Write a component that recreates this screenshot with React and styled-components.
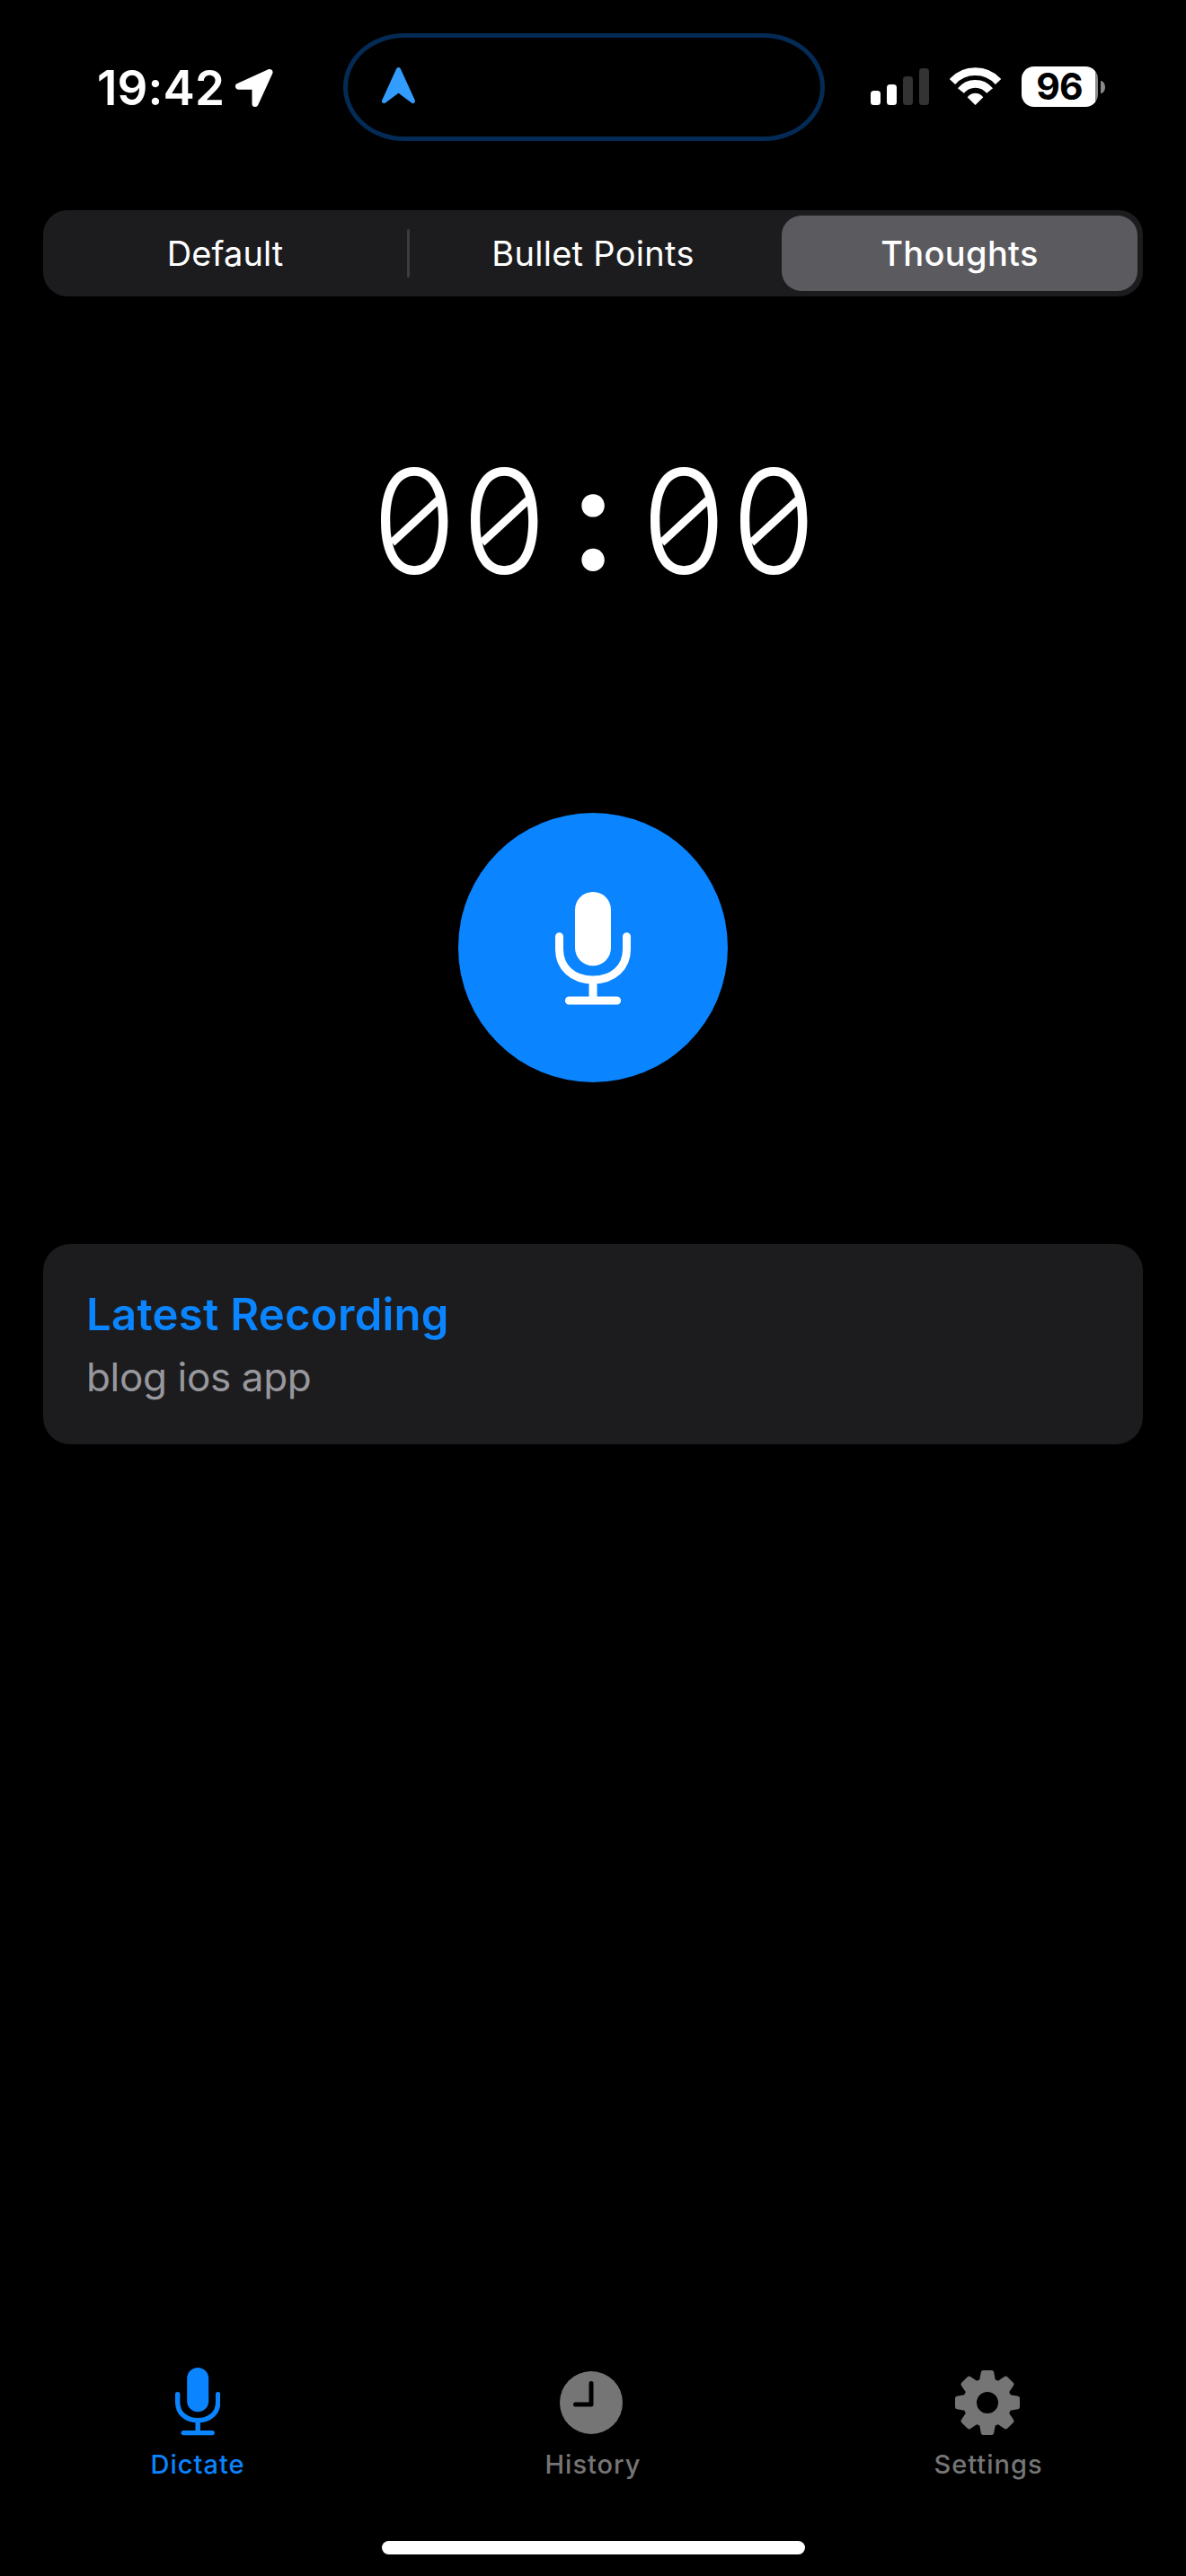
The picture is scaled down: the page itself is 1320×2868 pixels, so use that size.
import React from "react";
import styled, { createGlobalStyle } from "styled-components";

const blue = "#0a84ff";
const gray = "#757575";

const GlobalStyle = createGlobalStyle`
  *, *::before, *::after { box-sizing: border-box; }
  body { margin: 0; background: #000; }
`;

const Screen = styled.main`
  display: flex;
  flex-direction: column;
  width: 1320px;
  height: 2868px;
  overflow: hidden;
  background: #000;
  color: #fff;
  font-family: Inter, "Liberation Sans", sans-serif;
  font-feature-settings: "kern";
`;

const StatusBar = styled.header`
  display: grid;
  grid-template-columns: 382px 536px 402px;
  height: 234px;
  padding-top: 37px;
  align-items: start;
`;

const StatusSide = styled.div`
  display: flex;
  align-items: center;
  height: ${(p) => p.$height}px;
  padding-left: ${(p) => p.$inset}px;
`;

const Time = styled.span`
  width: 154px;
  font-size: 53px;
  line-height: 64px;
  font-weight: 600;
  letter-spacing: 0.1px;
  white-space: nowrap;
`;

const Island = styled.div`
  display: flex;
  align-items: center;
  height: 120px;
  padding: 0 0 5px 37px;
  border: 5px solid #032b55;
  border-radius: 68px / 60px;
`;

const Signal = styled.div`
  display: flex;
  align-items: flex-end;
  gap: 7px;
  height: 41px;
  margin-right: 23px;
`;

const Bar = styled.i`
  width: 11px;
  height: ${(p) => p.$height}px;
  border-radius: 3.5px;
  background: ${(p) => (p.$on ? "#fff" : "#333")};
`;

const Battery = styled.div`
  display: flex;
  align-items: center;
  gap: 3px;
  margin-left: 23px;
`;

const BatteryBody = styled.div`
  display: flex;
  align-items: center;
  justify-content: center;
  width: 85px;
  height: 45px;
  padding-right: 1px;
  border-radius: 14px;
  background: linear-gradient(to right, #fff 82px, #8a8a8a 82px);
  color: #000;
  font-size: 41px;
  font-weight: 700;
  line-height: 45px;
  letter-spacing: -1px;
`;

const BatteryTip = styled.i`
  width: 5px;
  height: 14px;
  border-radius: 0 5px 5px 0 / 0 7px 7px 0;
  background: #8a8a8a;
`;

const Segments = styled.nav`
  display: grid;
  grid-template-columns: 405px 3px 408px 1fr;
  align-items: center;
  flex: none;
  height: 96px;
  margin: 0 48px;
  padding-right: 6px;
  border-radius: 27px;
  background: #1c1c1e;
`;

const Segment = styled.button`
  display: flex;
  align-items: center;
  justify-content: center;
  height: 84px;
  margin-left: ${(p) => (p.$active ? 6 : 0)}px;
  padding: 0;
  border: 0;
  border-radius: 22px;
  background: ${(p) => (p.$active ? "#5b5a5f" : "transparent")};
  color: #fff;
  font-family: inherit;
  font-size: 38px;
  font-weight: ${(p) => (p.$active ? 500 : 400)};
  letter-spacing: ${(p) => p.$track}px;
`;

const Divider = styled.i`
  height: 54px;
  border-radius: 2px;
  background: #3c3c3f;
`;

const Timer = styled.time`
  display: flex;
  flex: none;
  justify-content: center;
  height: 160px;
  margin-top: 170px;
  font-size: 162px;
  line-height: 160px;
`;

const Colon = styled.span`
  width: 100px;
  padding-bottom: 8px;
  font-weight: 600;
  line-height: 152px;
  text-align: center;
`;

const DigitCell = styled.span`
  display: grid;
  place-items: center;
  width: 100px;
  height: 160px;

  &::after {
    content: "";
    grid-area: 1 / 1;
    width: 70px;
    height: 9px;
    background: #fff;
    transform: rotate(-42.7deg);
  }
`;

const Digit = styled.span`
  grid-area: 1 / 1;
  font-size: 160px;
  font-weight: 330;
  font-feature-settings: "tnum";
  transform: translateX(-0.5px) scaleX(0.95);
`;

const RecordButton = styled.button`
  display: flex;
  align-items: center;
  justify-content: center;
  flex: none;
  align-self: center;
  width: 300px;
  height: 300px;
  margin-top: 245px;
  padding: 1px 0 0;
  border: 0;
  border-radius: 50%;
  background: ${blue};
  color: #fff;
`;

const Card = styled.section`
  display: flex;
  flex-direction: column;
  flex: none;
  height: 223px;
  margin: 180px 48px 0;
  padding: 48px 48px 0;
  border-radius: 30px;
  background: #1c1c1e;
`;

const CardTitle = styled.h2`
  margin: 0;
  color: ${blue};
  font-size: 49px;
  line-height: 62px;
  font-weight: 600;
  letter-spacing: 0.28px;
`;

const CardText = styled.p`
  margin: 8px 0 0;
  color: #98979d;
  font-size: 44px;
  line-height: 60px;
  letter-spacing: -0.35px;
`;

const TabBar = styled.nav`
  display: grid;
  grid-template-columns: repeat(3, 440px);
  height: 193px;
  margin-top: auto;
`;

const Tab = styled.button`
  display: flex;
  flex-direction: column;
  align-items: center;
  padding: 0;
  border: 0;
  background: none;
  color: ${(p) => (p.$active ? blue : gray)};
  font-family: inherit;
`;

const TabIcon = styled.span`
  display: flex;
  align-items: center;
  justify-content: center;
  height: 78px;
  padding-right: ${(p) => p.$nudge || 0}px;
  padding-bottom: ${(p) => p.$lift || 0}px;
`;

const TabLabel = styled.span`
  margin-top: 12px;
  font-size: 29px;
  line-height: 36px;
  font-weight: 500;
  letter-spacing: 1px;
`;

const HomeArea = styled.footer`
  display: flex;
  justify-content: center;
  height: 39px;
`;

const HomeBar = styled.i`
  width: 471px;
  height: 15px;
  border-radius: 8px;
  background: #fff;
`;

function MicIcon({ width }) {
  return (
    <svg width={width} height={(width * 126) / 84} viewBox="0 0 84 126" fill="currentColor">
      <rect x="22" y="0" width="40" height="82.3" rx="20" />
      <path
        d="M4.5 49.7V64C4.5 84 19.5 98 42 98S79.5 84 79.5 64V49.7M42 98V121M15.4 121H68.6"
        fill="none"
        stroke="currentColor"
        strokeWidth="9"
        strokeLinecap="round"
      />
    </svg>
  );
}

function ClockIcon() {
  return (
    <svg width="70" height="70" viewBox="0 0 70 70">
      <circle cx="35" cy="35" r="35" fill="currentColor" />
      <path
        d="M35 13.5V37H17.5"
        fill="none"
        stroke="#000"
        strokeWidth="5"
        strokeLinecap="round"
        strokeLinejoin="round"
      />
    </svg>
  );
}

function GearIcon() {
  const teeth = [0, 45, 90, 135, 180, 225, 270, 315];
  return (
    <svg width="72" height="72" viewBox="-36 -36 72 72">
      <g fill="currentColor" stroke="currentColor" strokeWidth="5" strokeLinejoin="round">
        {teeth.map((angle) => (
          <path key={angle} d="M-4.7 -33.5H4.7L6.8 -22H-6.8Z" transform={`rotate(${angle})`} />
        ))}
      </g>
      <circle r="19.5" fill="none" stroke="currentColor" strokeWidth="15" />
    </svg>
  );
}

function LocationIcon() {
  return (
    <svg width="42" height="42" viewBox="0 0 42 42">
      <path
        d="M38 3.5L3.5 19.2H22V38.5Z"
        fill="#fff"
        stroke="#fff"
        strokeWidth="7"
        strokeLinejoin="round"
      />
    </svg>
  );
}

function NavigationIcon() {
  return (
    <svg width="39" height="42" viewBox="0 0 39 42">
      <path
        d="M19.5 3.5L3.5 38.5L19.5 26.5L35.5 38.5Z"
        fill="#339cff"
        stroke="#339cff"
        strokeWidth="5"
        strokeLinejoin="round"
      />
    </svg>
  );
}

function WifiIcon() {
  return (
    <svg width="57" height="43" viewBox="0 0 57 43">
      <path d="M28.5 42L19.7 33.2Q23.5 28.8 28.5 28.8T37.3 33.2Z" fill="#fff" />
      <g fill="none" stroke="#fff" strokeWidth="8.8">
        <path d="M12.4 26A20.7 20.7 0 0 1 44.6 26" />
        <path d="M2.9 16A34.6 34.6 0 0 1 54.1 16" />
      </g>
    </svg>
  );
}

const bars = [
  { height: 16, on: true },
  { height: 23, on: true },
  { height: 32, on: false },
  { height: 41, on: false },
];

export default function App() {
  return (
    <>
      <GlobalStyle />
      <Screen>
        <StatusBar>
          <StatusSide $inset={108} $height={121}>
            <Time>19:42</Time>
            <LocationIcon />
          </StatusSide>
          <Island>
            <NavigationIcon />
          </Island>
          <StatusSide $inset={51} $height={119}>
            <Signal>
              {bars.map((bar) => (
                <Bar key={bar.height} $height={bar.height} $on={bar.on} />
              ))}
            </Signal>
            <WifiIcon />
            <Battery>
              <BatteryBody>96</BatteryBody>
              <BatteryTip />
            </Battery>
          </StatusSide>
        </StatusBar>

        <Segments>
          <Segment $track={0.1}>Default</Segment>
          <Divider />
          <Segment $track={0.3}>Bullet Points</Segment>
          <Segment $active $track={0.35}>Thoughts</Segment>
        </Segments>

        <Timer>
          {"00:00".split("").map((char, i) =>
            char === ":" ? (
              <Colon key={i}>{char}</Colon>
            ) : (
              <DigitCell key={i}>
                <Digit>{char}</Digit>
              </DigitCell>
            )
          )}
        </Timer>

        <RecordButton aria-label="Record">
          <MicIcon width={84} />
        </RecordButton>

        <Card>
          <CardTitle>Latest Recording</CardTitle>
          <CardText>blog ios app</CardText>
        </Card>

        <TabBar>
          <Tab $active>
            <TabIcon $lift={2}>
              <MicIcon width={50.4} />
            </TabIcon>
            <TabLabel>Dictate</TabLabel>
          </Tab>
          <Tab>
            <TabIcon $nudge={4}>
              <ClockIcon />
            </TabIcon>
            <TabLabel>History</TabLabel>
          </Tab>
          <Tab>
            <TabIcon $nudge={2}>
              <GearIcon />
            </TabIcon>
            <TabLabel>Settings</TabLabel>
          </Tab>
        </TabBar>
        <HomeArea>
          <HomeBar />
        </HomeArea>
      </Screen>
    </>
  );
}
